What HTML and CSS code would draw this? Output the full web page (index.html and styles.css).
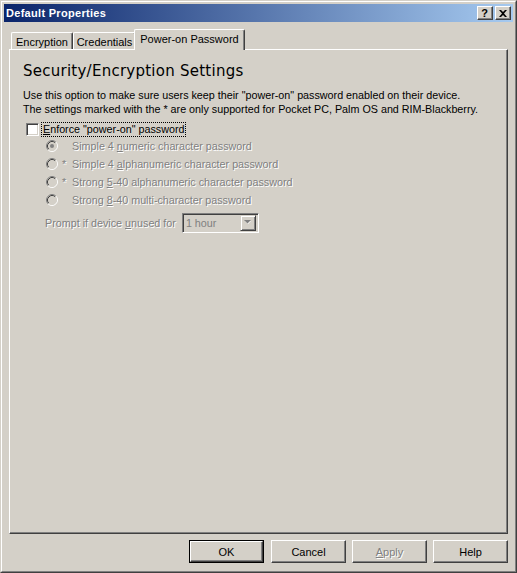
FILE: index.html
```html
<!DOCTYPE html>
<html>
<head>
<meta charset="utf-8">
<link rel="stylesheet" href="styles.css">
</head>
<body>
<div class="window">
  <div class="window-inner">
    <div class="titlebar">
      <span class="title">Default Properties</span>
      <div class="tb-buttons">
        <span class="tb-btn tb-help">?</span>
        <span class="tb-btn tb-close">
          <svg width="8" height="7" viewBox="0 0 8 7"><path d="M0 0h2l2 2 2-2h2L5 3.5 8 7H6L4 5 2 7H0l3-3.5z" fill="#000"/></svg>
        </span>
      </div>
    </div>
    <div class="content">
      <div class="tabs">
        <div class="tab tab-enc">Encryption</div>
        <div class="tab tab-cred">Credentials</div>
        <div class="tab tab-sel">Power-on Password</div>
      </div>
      <div class="panel">
        <h1 class="heading">Security/Encryption Settings</h1>
        <p class="desc">Use this option to make sure users keep their "power-on" password enabled on their device.<br>The settings marked with the * are only supported for Pocket PC, Palm OS and RIM-Blackberry.</p>
        <div class="check-row">
          <span class="checkbox"></span>
          <span class="check-label"><u>E</u>nforce "power-on" password</span>
        </div>
        <div class="radio-row">
          <svg class="radio" width="12" height="12" viewBox="0 0 12 12"><circle cx="6" cy="6" r="5" fill="#d4d0c8"/><path d="M2.11 9.89A5.5 5.5 0 0 1 9.89 2.11" stroke="#808080" fill="none"/><path d="M9.89 2.11A5.5 5.5 0 0 1 2.11 9.89" stroke="#fff" fill="none"/><path d="M2.82 9.18A4.5 4.5 0 0 1 9.18 2.82" stroke="#404040" fill="none"/><path d="M9.18 2.82A4.5 4.5 0 0 1 2.82 9.18" stroke="#d4d0c8" fill="none"/><circle cx="6" cy="6" r="2" fill="#808080"/></svg>
          <span class="star"></span>
          <span class="dis">Simple 4 <u>n</u>umeric character password</span>
        </div>
        <div class="radio-row">
          <svg class="radio" width="12" height="12" viewBox="0 0 12 12"><circle cx="6" cy="6" r="5" fill="#d4d0c8"/><path d="M2.11 9.89A5.5 5.5 0 0 1 9.89 2.11" stroke="#808080" fill="none"/><path d="M9.89 2.11A5.5 5.5 0 0 1 2.11 9.89" stroke="#fff" fill="none"/><path d="M2.82 9.18A4.5 4.5 0 0 1 9.18 2.82" stroke="#404040" fill="none"/><path d="M9.18 2.82A4.5 4.5 0 0 1 2.82 9.18" stroke="#d4d0c8" fill="none"/></svg>
          <span class="star dis">*</span>
          <span class="dis">Simple 4 <u>a</u>lphanumeric character password</span>
        </div>
        <div class="radio-row">
          <svg class="radio" width="12" height="12" viewBox="0 0 12 12"><circle cx="6" cy="6" r="5" fill="#d4d0c8"/><path d="M2.11 9.89A5.5 5.5 0 0 1 9.89 2.11" stroke="#808080" fill="none"/><path d="M9.89 2.11A5.5 5.5 0 0 1 2.11 9.89" stroke="#fff" fill="none"/><path d="M2.82 9.18A4.5 4.5 0 0 1 9.18 2.82" stroke="#404040" fill="none"/><path d="M9.18 2.82A4.5 4.5 0 0 1 2.82 9.18" stroke="#d4d0c8" fill="none"/></svg>
          <span class="star dis">*</span>
          <span class="dis">Strong <u>5</u>-40 alphanumeric character password</span>
        </div>
        <div class="radio-row">
          <svg class="radio" width="12" height="12" viewBox="0 0 12 12"><circle cx="6" cy="6" r="5" fill="#d4d0c8"/><path d="M2.11 9.89A5.5 5.5 0 0 1 9.89 2.11" stroke="#808080" fill="none"/><path d="M9.89 2.11A5.5 5.5 0 0 1 2.11 9.89" stroke="#fff" fill="none"/><path d="M2.82 9.18A4.5 4.5 0 0 1 9.18 2.82" stroke="#404040" fill="none"/><path d="M9.18 2.82A4.5 4.5 0 0 1 2.82 9.18" stroke="#d4d0c8" fill="none"/></svg>
          <span class="star"></span>
          <span class="dis">Strong <u>8</u>-40 multi-character password</span>
        </div>
        <div class="prompt-row">
          <span class="dis">Prompt if device <u>u</u>nused for</span>
          <div class="combo">
            <span class="combo-text">1 hour</span>
            <span class="combo-btn">
              <svg width="7" height="5" viewBox="0 0 7 5"><path d="M1 1h6L4 4z" fill="#fff"/><path d="M0 0h7L3.5 3.5z" fill="#808080"/></svg>
            </span>
          </div>
        </div>
      </div>
      <div class="buttons">
        <div class="btn-default"><button class="btn">OK</button></div>
        <button class="btn">Cancel</button>
        <button class="btn btn-dis"><u>A</u>pply</button>
        <button class="btn">Help</button>
      </div>
    </div>
  </div>
</div>
</body>
</html>
```

FILE: styles.css
```css
* { box-sizing: border-box; }
html, body { margin: 0; padding: 0; background: #d4d0c8; }
body {
  font-family: "Liberation Sans", Arial, sans-serif;
  font-size: 11px;
  color: #000;
}
.window {
  width: 517px;
  height: 573px;
  border: 1px solid;
  border-color: #d4d0c8 #404040 #404040 #d4d0c8;
  background: #d4d0c8;
  display: flex;
  flex-direction: column;
}
.window-inner {
  flex: 1;
  border: 1px solid;
  border-color: #fff #808080 #808080 #fff;
  padding: 2px;
  display: flex;
  flex-direction: column;
}
.titlebar {
  height: 18px;
  flex: none;
  background: linear-gradient(to right, #0a246a, #a6caf0);
  display: flex;
  align-items: center;
  justify-content: space-between;
  padding: 0 2px 0 2px;
}
.title {
  color: #fff;
  font-weight: bold;
  font-size: 11px;
  letter-spacing: 0.3px;
}
.tb-buttons { display: flex; gap: 2px; }
.tb-btn {
  width: 16px;
  height: 14px;
  background: #d4d0c8;
  border: 1px solid;
  border-color: #fff #404040 #404040 #fff;
  box-shadow: inset -1px -1px #808080;
  display: flex;
  align-items: center;
  justify-content: center;
  font-weight: bold;
  font-size: 11px;
  line-height: 1;
}
.tb-help { padding-right: 1px; }
.content {
  flex: 1;
  display: flex;
  flex-direction: column;
  padding: 7px 5px 6px 5px;
}
.tabs {
  height: 21px;
  display: flex;
  align-items: flex-end;
  padding-left: 2px;
}
.tab {
  height: 18px;
  border: 1px solid;
  border-bottom: none;
  border-color: #fff #404040 #fff #fff;
  box-shadow: inset -1px 0 #808080;
  border-radius: 2px 2px 0 0;
  background: #d4d0c8;
  display: flex;
  align-items: center;
  justify-content: center;
  padding-top: 0;
}
.tab-enc { width: 62px; }
.tab-cred { width: 63px; }
.tab-sel {
  width: 111px;
  height: 21px;
  margin-left: -2px;
  position: relative;
  z-index: 2;
  padding-top: 0;
  padding-bottom: 3px;
}
.panel {
  flex: 1;
  margin-top: -1px;
  border: 1px solid;
  border-color: #fff #404040 #404040 #fff;
  box-shadow: inset -1px -1px #808080;
  padding: 0 13px;
  position: relative;
  z-index: 1;
  font-size: 10.75px;
}
.heading {
  margin: 13px 0 0 0;
  font-family: "DejaVu Sans", Verdana, sans-serif;
  font-size: 15px;
  font-weight: normal;
  line-height: 17px;
  letter-spacing: 0.25px;
}
.desc {
  margin: 8px 0 0 0;
  line-height: 14px;
}
.check-row {
  margin-top: 6px;
  height: 14px;
  display: flex;
  align-items: center;
  padding-left: 3px;
}
.checkbox {
  width: 13px;
  height: 13px;
  background: #fff;
  border: 1px solid;
  border-color: #808080 #fff #fff #808080;
  box-shadow: inset 1px 1px #404040, inset -1px -1px #d4d0c8;
}
.check-label {
  margin-left: 3px;
  outline: 1px dotted #000;
  padding: 0 1px;
  line-height: 13px;
}
.check-row + .radio-row { margin-top: 1px; }
.radio-row {
  height: 18px;
  display: flex;
  align-items: center;
  padding-left: 23px;
}
.radio { flex: none; }
.star {
  width: 14px;
  padding-left: 4px;
  flex: none;
}
.dis {
  color: #808080;
  text-shadow: 1px 1px 0 #fff;
}
.prompt-row {
  margin-top: 3px;
  display: flex;
  align-items: center;
  padding-left: 22px;
  height: 21px;
}
.combo {
  margin-left: 6px;
  width: 77px;
  height: 20px;
  border: 1px solid;
  border-color: #808080 #fff #fff #808080;
  box-shadow: inset 1px 1px #404040, inset -1px -1px #d4d0c8;
  display: flex;
  align-items: center;
  padding: 2px;
}
.combo-text {
  flex: 1;
  color: #808080;
  padding-left: 1px;
}
.combo-btn {
  width: 16px;
  height: 16px;
  border: 1px solid;
  border-color: #d4d0c8 #404040 #404040 #d4d0c8;
  box-shadow: inset 1px 1px #fff, inset -1px -1px #808080;
  display: flex;
  align-items: center;
  justify-content: center;
}
.buttons {
  margin-top: 6px;
  height: 23px;
  display: flex;
  justify-content: flex-end;
  gap: 6px;
}
.btn-default {
  border: 1px solid #000;
  width: 75px;
  height: 23px;
  margin-right: 1px;
}
.btn {
  width: 75px;
  height: 23px;
  margin: 0;
  font-family: "Liberation Sans", Arial, sans-serif;
  font-size: 11px;
  color: #000;
  background: #d4d0c8;
  border: 1px solid;
  border-color: #fff #404040 #404040 #fff;
  box-shadow: inset -1px -1px #808080;
  padding: 0;
}
.btn-default .btn {
  width: 73px;
  height: 21px;
}
.btn-dis {
  color: #808080;
  text-shadow: 1px 1px 0 #fff;
}
```
